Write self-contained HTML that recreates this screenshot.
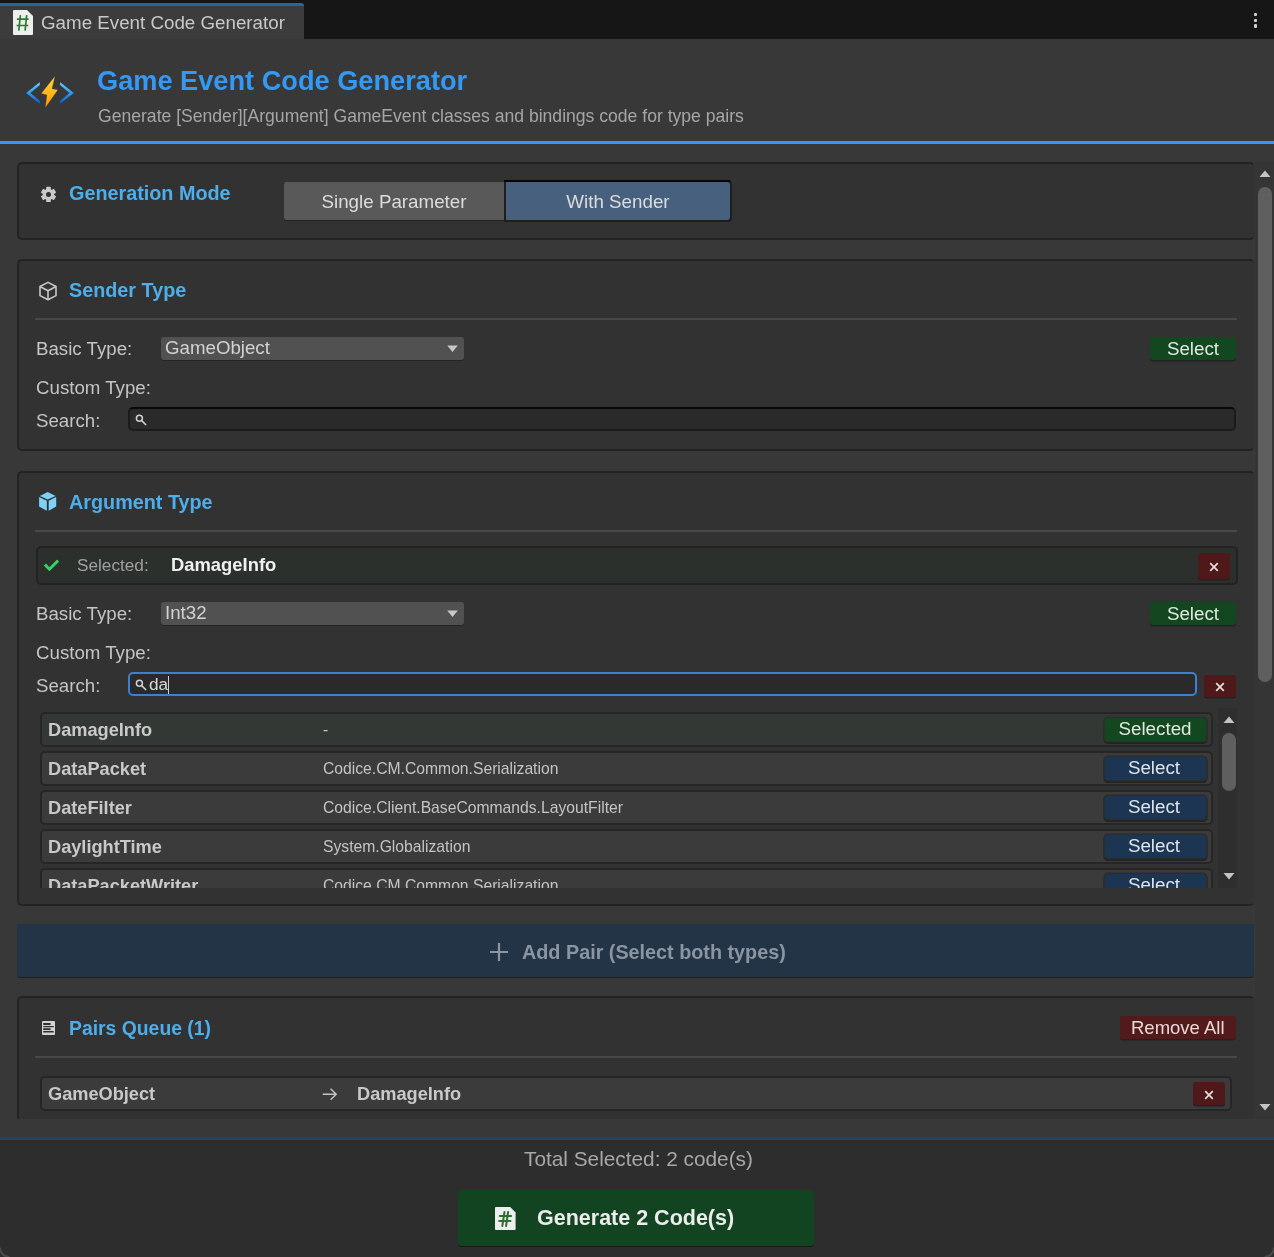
<!DOCTYPE html>
<html><head><meta charset="utf-8"><style>
html,body{margin:0;padding:0;}
body{width:1274px;height:1257px;position:relative;overflow:hidden;background:#383838;font-family:"Liberation Sans",sans-serif;}
body div{position:absolute;box-sizing:content-box;}
.t{white-space:nowrap;line-height:1;will-change:transform;}
</style></head><body>
<div style="left:0px;top:0px;width:1274px;height:39px;background:#161616;border-radius:0px;"></div>
<div style="left:0;top:3px;width:304px;height:36px;background:#3c3c3c;border-top-right-radius:4px;"></div>
<div style="left:0;top:3px;width:304px;height:3px;background:#2c6496;border-top-right-radius:4px;"></div>
<svg style="position:absolute;left:13px;top:10px;" width="21" height="26" viewBox="0 0 21 26"><path d="M1 0 H14 L20 6 V24 Q20 25 19 25 H1 Q0 25 0 24 V1 Q0 0 1 0Z" fill="#eeeeee"/><g stroke="#2e7c34" stroke-width="1.7" fill="none"><path d="M7.4 5.2 L5.8 20.7 M13.7 5.2 L12.1 20.7 M3.9 9.2 H15.6 M3.6 15.5 H15.3"/></g></svg>
<div class="t" style="left:40.6px;top:14.27px;font-size:18.76px;color:#c8c8c8;font-weight:400;">Game Event Code Generator</div>
<div style="left:1253.8px;top:12.7px;width:3.6px;height:3.6px;background:#cfcfcf;border-radius:1px;"></div>
<div style="left:1253.8px;top:18.5px;width:3.6px;height:3.6px;background:#cfcfcf;border-radius:1px;"></div>
<div style="left:1253.8px;top:24.4px;width:3.6px;height:3.6px;background:#cfcfcf;border-radius:1px;"></div>
<svg style="position:absolute;left:24px;top:74px;" width="52" height="36" viewBox="0 0 52 36"><defs>
<linearGradient id="gb" x1="0" y1="0" x2="0" y2="1"><stop offset="0" stop-color="#6ad5fc"/><stop offset="0.5" stop-color="#2f9af0"/><stop offset="1" stop-color="#0b5fcc"/></linearGradient>
<linearGradient id="go" x1="0" y1="0" x2="0" y2="1"><stop offset="0" stop-color="#ffdc3a"/><stop offset="1" stop-color="#ff9800"/></linearGradient></defs>
<path d="M15.8 7.9 L1.9 18.9 L15.8 29.9 L16 26.9 L6.6 18.9 L16 10.9 Z" fill="url(#gb)" stroke="#2a2a2a" stroke-width="0.4" stroke-opacity="0.5"/>
<path d="M36.1 7.9 L50 18.9 L36.1 29.9 L35.9 26.9 L45.3 18.9 L35.9 10.9 Z" fill="url(#gb)" stroke="#2a2a2a" stroke-width="0.4" stroke-opacity="0.5"/>
<path d="M31.1 2 L28.1 14.7 L34 15.8 L21.2 34 L22.8 20.9 L17.1 19.6 Z" fill="url(#go)" stroke="#1e2430" stroke-width="0.5" stroke-opacity="0.6"/></svg>
<div class="t" style="left:97px;top:67.33px;font-size:27.2px;color:#3399f7;font-weight:700;">Game Event Code Generator</div>
<div class="t" style="left:98px;top:108.07px;font-size:17.58px;color:#a6a6a6;font-weight:400;">Generate [Sender][Argument] GameEvent classes and bindings code for type pairs</div>
<div style="left:0px;top:141px;width:1274px;height:3px;background:#3299fb;border-radius:0px;"></div>
<div style="left:1255px;top:162px;width:19px;height:957px;background:#353535;border-radius:0px;"></div>
<svg style="position:absolute;left:1259px;top:170px;" width="12" height="8" viewBox="0 0 12 8"><path d="M0.5 7 L6 0.5 L11.5 7Z" fill="#c4c4c4"/></svg>
<div style="left:1258px;top:187px;width:14px;height:495px;background:#5f5f5f;border-radius:7px;"></div>
<svg style="position:absolute;left:1259px;top:1103px;" width="12" height="8" viewBox="0 0 12 8"><path d="M0.5 1 L6 7.5 L11.5 1Z" fill="#c4c4c4"/></svg>
<div style="left:17px;top:162px;width:1234px;height:74px;background:#323232;border:2px solid #232323;border-radius:5px;border-right-color:#333333;"></div>
<svg style="position:absolute;left:40px;top:186px;" width="17" height="17" viewBox="0 0 17 17"><g fill="#cacaca"><circle cx="8.5" cy="8.4" r="5.7"/><rect x="6.2" y="0.8" width="4.6" height="4" rx="0.6" transform="rotate(0 8.5 8.4)"/><rect x="6.2" y="0.8" width="4.6" height="4" rx="0.6" transform="rotate(60 8.5 8.4)"/><rect x="6.2" y="0.8" width="4.6" height="4" rx="0.6" transform="rotate(120 8.5 8.4)"/><rect x="6.2" y="0.8" width="4.6" height="4" rx="0.6" transform="rotate(180 8.5 8.4)"/><rect x="6.2" y="0.8" width="4.6" height="4" rx="0.6" transform="rotate(240 8.5 8.4)"/><rect x="6.2" y="0.8" width="4.6" height="4" rx="0.6" transform="rotate(300 8.5 8.4)"/></g><circle cx="8.5" cy="8.4" r="2.5" fill="#323232"/></svg>
<div class="t" style="left:69.0px;top:184.49px;font-size:19.8px;color:#4daeea;font-weight:700;">Generation Mode</div>
<div style="left:284px;top:182px;width:221px;height:38px;background:#595959;border-radius:3px;border-top-right-radius:0;border-bottom-right-radius:0;box-shadow:0 1px 0 #232323;"></div>
<div style="left:504px;top:180px;width:228px;height:42px;background:#1e1e1e;border-radius:4px;border-top-left-radius:0;border-bottom-left-radius:0;"></div>
<div style="left:504px;top:180px;width:226px;height:2px;background:#050505;border-radius:0px;"></div>
<div style="left:506px;top:182px;width:224px;height:38px;background:#46607e;border-radius:3px;border-top-left-radius:0;border-bottom-left-radius:0;"></div>
<div class="t" style="left:-6px;width:800px;text-align:center;top:192.66px;font-size:18.77px;color:#dcdcdc;font-weight:400;">Single Parameter</div>
<div class="t" style="left:217.5px;width:800px;text-align:center;top:192.66px;font-size:18.77px;color:#dcdcdc;font-weight:400;">With Sender</div>
<div style="left:17px;top:259px;width:1234px;height:188px;background:#323232;border:2px solid #232323;border-radius:5px;border-right-color:#333333;"></div>
<svg style="position:absolute;left:38px;top:281px;" width="20" height="21" viewBox="0 0 20 21"><g stroke="#c8c8c8" stroke-width="1.6" fill="none" stroke-linejoin="round"><path d="M10 1.4 L18 5.5 V14.6 L10 18.8 L2 14.6 V5.5 Z"/><path d="M2 5.5 L10 9.7 L18 5.5 M10 9.7 V18.8"/></g></svg>
<div class="t" style="left:69.0px;top:281.09px;font-size:19.8px;color:#4daeea;font-weight:700;">Sender Type</div>
<div style="left:35px;top:318px;width:1202px;height:2px;background:#484848;border-radius:0px;"></div>
<div class="t" style="left:36.0px;top:339.82px;font-size:18.7px;color:#c4c4c4;font-weight:400;">Basic Type:</div>
<div style="left:161px;top:337px;width:303px;height:23px;background:#515151;border-radius:3px;box-shadow:0 1px 0 #242424;"></div>
<div class="t" style="left:164.5px;top:339.12px;font-size:18.7px;color:#d2d2d2;font-weight:400;">GameObject</div>
<svg style="position:absolute;left:446.5px;top:344.5px;" width="11" height="8" viewBox="0 0 11 8"><path d="M0.2 0.4 H10.8 L5.5 7 Z" fill="#c8c8c8"/></svg>
<div style="left:1150px;top:337px;width:86px;height:23px;background:#13471f;border-radius:3px;box-shadow:0 1.5px 0 #222;"></div>
<div class="t" style="left:793.0px;width:800px;text-align:center;top:339.94px;font-size:18.8px;color:#dfe9df;font-weight:400;">Select</div>
<div class="t" style="left:36.0px;top:378.62px;font-size:18.7px;color:#c4c4c4;font-weight:400;">Custom Type:</div>
<div class="t" style="left:36.0px;top:411.62px;font-size:18.7px;color:#c4c4c4;font-weight:400;">Search:</div>
<div style="left:128px;top:407px;width:1104px;height:20px;background:#2a2a2a;border:2px solid #1b1b1b;border-radius:5px;border-top-color:#080808;"></div>
<svg style="position:absolute;left:135px;top:414px;" width="12" height="12" viewBox="0 0 12 12"><circle cx="4.4" cy="4.3" r="3.0" stroke="#d0d0d0" stroke-width="1.5" fill="none"/><path d="M6.6 6.5 L10.6 10.5" stroke="#d0d0d0" stroke-width="1.7" stroke-linecap="round"/></svg>
<div style="left:17px;top:471px;width:1234px;height:431px;background:#323232;border:2px solid #232323;border-radius:5px;border-right-color:#333333;"></div>
<svg style="position:absolute;left:39px;top:491px;" width="18" height="21" viewBox="0 0 18 21"><g fill="#7fd2f6"><path d="M8.7 1.1 L16.6 4.9 L8.7 8.6 L0.9 4.9Z"/><path d="M0.1 6 L7.8 9.8 V19.8 L0.1 15.6Z"/><path d="M9.7 9.8 L17.2 6.1 V15.6 L9.7 19.7Z"/></g></svg>
<div class="t" style="left:69.0px;top:493.09px;font-size:19.8px;color:#4daeea;font-weight:700;">Argument Type</div>
<div style="left:35px;top:530px;width:1202px;height:2px;background:#484848;border-radius:0px;"></div>
<div style="left:36px;top:546px;width:1198px;height:35px;background:#2b302c;border:2px solid #222222;border-radius:5px;"></div>
<svg style="position:absolute;left:44px;top:559px;" width="16" height="13" viewBox="0 0 16 13"><path d="M0.9 5.6 L5.4 10.2 L14.1 1.6" stroke="#37d16a" stroke-width="2.9" fill="none"/></svg>
<div class="t" style="left:76.7px;top:556.89px;font-size:17.2px;color:#a0a0a0;font-weight:400;">Selected:</div>
<div class="t" style="left:171.0px;top:556.27px;font-size:18.4px;color:#f0f0f0;font-weight:700;">DamageInfo</div>
<div style="left:1198px;top:553px;width:32px;height:26px;background:#4f1919;border-radius:3px;box-shadow:0 1.5px 0 #222;"></div>
<svg style="position:absolute;left:1208.0px;top:561.2px;" width="12" height="12" viewBox="0 0 12 12"><path d="M2.2 2.2 L9.8 9.8 M9.8 2.2 L2.2 9.8" stroke="#e6dede" stroke-width="1.7"/></svg>
<div class="t" style="left:36.0px;top:605.02px;font-size:18.7px;color:#c4c4c4;font-weight:400;">Basic Type:</div>
<div style="left:161px;top:602px;width:303px;height:23px;background:#515151;border-radius:3px;box-shadow:0 1px 0 #242424;"></div>
<div class="t" style="left:164.5px;top:604.12px;font-size:18.7px;color:#d2d2d2;font-weight:400;">Int32</div>
<svg style="position:absolute;left:446.5px;top:609.5px;" width="11" height="8" viewBox="0 0 11 8"><path d="M0.2 0.4 H10.8 L5.5 7 Z" fill="#c8c8c8"/></svg>
<div style="left:1150px;top:602px;width:86px;height:23px;background:#13471f;border-radius:3px;box-shadow:0 1.5px 0 #222;"></div>
<div class="t" style="left:793.0px;width:800px;text-align:center;top:604.94px;font-size:18.8px;color:#dfe9df;font-weight:400;">Select</div>
<div class="t" style="left:36.0px;top:643.82px;font-size:18.7px;color:#c4c4c4;font-weight:400;">Custom Type:</div>
<div class="t" style="left:36.0px;top:676.72px;font-size:18.7px;color:#c4c4c4;font-weight:400;">Search:</div>
<div style="left:128px;top:672px;width:1065px;height:20px;background:#2a2a2a;border:2px solid #3d80d0;border-radius:5px;"></div>
<svg style="position:absolute;left:135px;top:679px;" width="12" height="12" viewBox="0 0 12 12"><circle cx="4.4" cy="4.3" r="3.0" stroke="#d0d0d0" stroke-width="1.5" fill="none"/><path d="M6.6 6.5 L10.6 10.5" stroke="#d0d0d0" stroke-width="1.7" stroke-linecap="round"/></svg>
<div class="t" style="left:149px;top:676.19px;font-size:17.2px;color:#d8d8d8;font-weight:400;">da</div>
<div style="left:168px;top:676px;width:1px;height:18px;background:#d0d0d0;border-radius:0px;"></div>
<div style="left:1204px;top:675px;width:32px;height:22px;background:#4f1919;border-radius:3px;box-shadow:0 1.5px 0 #222;"></div>
<svg style="position:absolute;left:1214.0px;top:681.2px;" width="12" height="12" viewBox="0 0 12 12"><path d="M2.2 2.2 L9.8 9.8 M9.8 2.2 L2.2 9.8" stroke="#e6dede" stroke-width="1.7"/></svg>
<div style="left:36px;top:708px;width:1202px;height:180px;overflow:hidden;">
<div style="left:4px;top:3.5px;width:1169px;height:31px;background:#343834;border:2px solid #262626;border-radius:5px;"></div>
<div class="t" style="left:11.5px;top:13.24px;font-size:18.2px;color:#c9c9c9;font-weight:700;">DamageInfo</div>
<div class="t" style="left:286.6px;top:14.06px;font-size:15.7px;color:#c4c4c4;font-weight:400;">-</div>
<div style="left:1069px;top:10px;width:101px;height:23px;background:#13471f;border-radius:3px;box-shadow:0 0 0 1.5px #2c2f2c, 0 1.5px 0 1.5px #222;"></div>
<div class="t" style="left:718.5px;width:800px;text-align:center;top:12.44px;font-size:18.8px;color:#dfe9df;font-weight:400;">Selected</div>
<div style="left:4px;top:42.5px;width:1169px;height:31px;background:#3b3b3b;border:2px solid #262626;border-radius:5px;"></div>
<div class="t" style="left:11.5px;top:52.24px;font-size:18.2px;color:#c9c9c9;font-weight:700;">DataPacket</div>
<div class="t" style="left:286.6px;top:53.06px;font-size:15.7px;color:#c4c4c4;font-weight:400;">Codice.CM.Common.Serialization</div>
<div style="left:1069px;top:49px;width:101px;height:23px;background:#1b3552;border-radius:3px;box-shadow:0 0 0 1.5px #2c2c2c, 0 1.5px 0 1.5px #222;"></div>
<div class="t" style="left:718.2px;width:800px;text-align:center;top:51.44px;font-size:18.8px;color:#dde3ea;font-weight:400;">Select</div>
<div style="left:4px;top:81.5px;width:1169px;height:31px;background:#3b3b3b;border:2px solid #262626;border-radius:5px;"></div>
<div class="t" style="left:11.5px;top:91.24px;font-size:18.2px;color:#c9c9c9;font-weight:700;">DateFilter</div>
<div class="t" style="left:286.6px;top:92.06px;font-size:15.7px;color:#c4c4c4;font-weight:400;">Codice.Client.BaseCommands.LayoutFilter</div>
<div style="left:1069px;top:88px;width:101px;height:23px;background:#1b3552;border-radius:3px;box-shadow:0 0 0 1.5px #2c2c2c, 0 1.5px 0 1.5px #222;"></div>
<div class="t" style="left:718.2px;width:800px;text-align:center;top:90.44px;font-size:18.8px;color:#dde3ea;font-weight:400;">Select</div>
<div style="left:4px;top:120.5px;width:1169px;height:31px;background:#3b3b3b;border:2px solid #262626;border-radius:5px;"></div>
<div class="t" style="left:11.5px;top:130.24px;font-size:18.2px;color:#c9c9c9;font-weight:700;">DaylightTime</div>
<div class="t" style="left:286.6px;top:131.06px;font-size:15.7px;color:#c4c4c4;font-weight:400;">System.Globalization</div>
<div style="left:1069px;top:127px;width:101px;height:23px;background:#1b3552;border-radius:3px;box-shadow:0 0 0 1.5px #2c2c2c, 0 1.5px 0 1.5px #222;"></div>
<div class="t" style="left:718.2px;width:800px;text-align:center;top:129.44px;font-size:18.8px;color:#dde3ea;font-weight:400;">Select</div>
<div style="left:4px;top:159.5px;width:1169px;height:31px;background:#3b3b3b;border:2px solid #262626;border-radius:5px;"></div>
<div class="t" style="left:11.5px;top:169.24px;font-size:18.2px;color:#c9c9c9;font-weight:700;">DataPacketWriter</div>
<div class="t" style="left:286.6px;top:170.06px;font-size:15.7px;color:#c4c4c4;font-weight:400;">Codice.CM.Common.Serialization</div>
<div style="left:1069px;top:166px;width:101px;height:23px;background:#1b3552;border-radius:3px;box-shadow:0 0 0 1.5px #2c2c2c, 0 1.5px 0 1.5px #222;"></div>
<div class="t" style="left:718.2px;width:800px;text-align:center;top:168.44px;font-size:18.8px;color:#dde3ea;font-weight:400;">Select</div>
<div style="left:1182px;top:0px;width:19px;height:180px;background:#2e2e2e;border-radius:0px;"></div>
<svg style="position:absolute;left:1187px;top:8px;" width="12" height="8" viewBox="0 0 12 8"><path d="M0.5 7 L6 0.5 L11.5 7Z" fill="#c4c4c4"/></svg>
<div style="left:1186px;top:25px;width:14px;height:58px;background:#5f5f5f;border-radius:7px;"></div>
<svg style="position:absolute;left:1187px;top:164px;" width="12" height="8" viewBox="0 0 12 8"><path d="M0.5 1 L6 7.5 L11.5 1Z" fill="#c4c4c4"/></svg>
</div>
<div style="left:17px;top:924px;width:1237px;height:53px;background:#243447;border-radius:3px;box-shadow:0 1px 0 #1f1f1f;"></div>
<svg style="position:absolute;left:489px;top:942px;" width="20" height="20" viewBox="0 0 20 20"><path d="M10 1 V19 M1 10 H19" stroke="#8a95a1" stroke-width="2.2"/></svg>
<div class="t" style="left:521.5px;top:942.79px;font-size:19.8px;color:#8a95a1;font-weight:700;">Add Pair (Select both types)</div>
<div style="left:0;top:162px;width:1255px;height:957px;overflow:hidden;">
<div style="left:17px;top:834px;width:1234px;height:296px;background:#323232;border:2px solid #232323;border-radius:5px;border-right-color:#333333;"></div>
</div>
<svg style="position:absolute;left:42px;top:1021px;" width="13" height="14" viewBox="0 0 13 14"><rect x="0" y="0" width="13" height="14" rx="1" fill="#d4d4d4"/><g fill="#2e2e2e"><rect x="1.1" y="2.1" width="7.6" height="1.8" rx="0.6"/><rect x="1.1" y="5.1" width="10.7" height="1.1" rx="0.5"/><rect x="1.1" y="7.3" width="7.6" height="1.7" rx="0.6"/><rect x="1.1" y="10.1" width="10.7" height="1.5" rx="0.6"/></g></svg>
<div class="t" style="left:69.0px;top:1019.46px;font-size:19.36px;color:#4daeea;font-weight:700;">Pairs Queue (1)</div>
<div style="left:1120px;top:1016px;width:116px;height:23px;background:#521a1a;border-radius:3px;box-shadow:0 1.5px 0 #222;"></div>
<div class="t" style="left:1131.2px;top:1018.99px;font-size:18.5px;color:#ead8d8;font-weight:400;">Remove All</div>
<div style="left:35px;top:1056px;width:1202px;height:2px;background:#484848;border-radius:0px;"></div>
<div style="left:40px;top:1076px;width:1188px;height:31px;background:#3b3b3b;border:2px solid #262626;border-radius:5px;"></div>
<div class="t" style="left:47.8px;top:1085.44px;font-size:18.2px;color:#c9c9c9;font-weight:700;">GameObject</div>
<svg style="position:absolute;left:322px;top:1088px;" width="16" height="13" viewBox="0 0 16 13"><path d="M0.8 6.3 H14.2 M8.6 0.8 L14.2 6.3 L8.6 11.8" stroke="#c4c4c4" stroke-width="1.4" fill="none"/></svg>
<div class="t" style="left:356.5px;top:1085.44px;font-size:18.2px;color:#c9c9c9;font-weight:700;">DamageInfo</div>
<div style="left:1193px;top:1082px;width:32px;height:23px;background:#4f1919;border-radius:3px;box-shadow:0 1.5px 0 #222;"></div>
<svg style="position:absolute;left:1203.0px;top:1088.7px;" width="12" height="12" viewBox="0 0 12 12"><path d="M2.2 2.2 L9.8 9.8 M9.8 2.2 L2.2 9.8" stroke="#e6dede" stroke-width="1.7"/></svg>
<div style="left:0px;top:1119px;width:1274px;height:18px;background:#383838;border-radius:0px;"></div>
<div style="left:0px;top:1137px;width:1274px;height:3px;background:#264263;border-radius:0px;"></div>
<div style="left:0px;top:1140px;width:1274px;height:117px;background:#2d2d2d;border-radius:0px;"></div>
<div class="t" style="left:523.5px;top:1149.24px;font-size:20.8px;color:#a8a8a8;font-weight:400;">Total Selected: 2 code(s)</div>
<div style="left:458px;top:1190px;width:356px;height:56px;background:#134421;border-radius:3px;box-shadow:0 1px 0 #1a1a1a;"></div>
<svg style="position:absolute;left:495px;top:1207px;" width="21" height="24" viewBox="0 0 21 24"><path d="M1 0 H15.2 L20.6 5.4 V22 Q20.6 23 19.6 23 H1 Q0 23 0 22 V1 Q0 0 1 0Z" fill="#eeeeee"/><g stroke="#2e6f31" stroke-width="2" fill="none" stroke-linecap="round"><path d="M9.5 5 L7.3 19 M13.1 5 L11.1 19 M4.8 8.9 H16.2 M4.2 14 H15.5"/></g></svg>
<div class="t" style="left:536.5px;top:1208.25px;font-size:21.5px;color:#ececec;font-weight:700;">Generate 2 Code(s)</div>
<svg style="position:absolute;left:1262px;top:1245px;" width="12" height="12" viewBox="0 0 12 12"><path d="M12 2.6 A9.4 9.4 0 0 1 2.6 12" stroke="#4a4a4a" stroke-width="2" fill="none"/></svg>
<svg style="position:absolute;left:0px;top:1245px;" width="12" height="12" viewBox="0 0 12 12"><path d="M0 2.6 A9.4 9.4 0 0 0 9.4 12" stroke="#4a4a4a" stroke-width="2" fill="none"/></svg>
</body></html>
